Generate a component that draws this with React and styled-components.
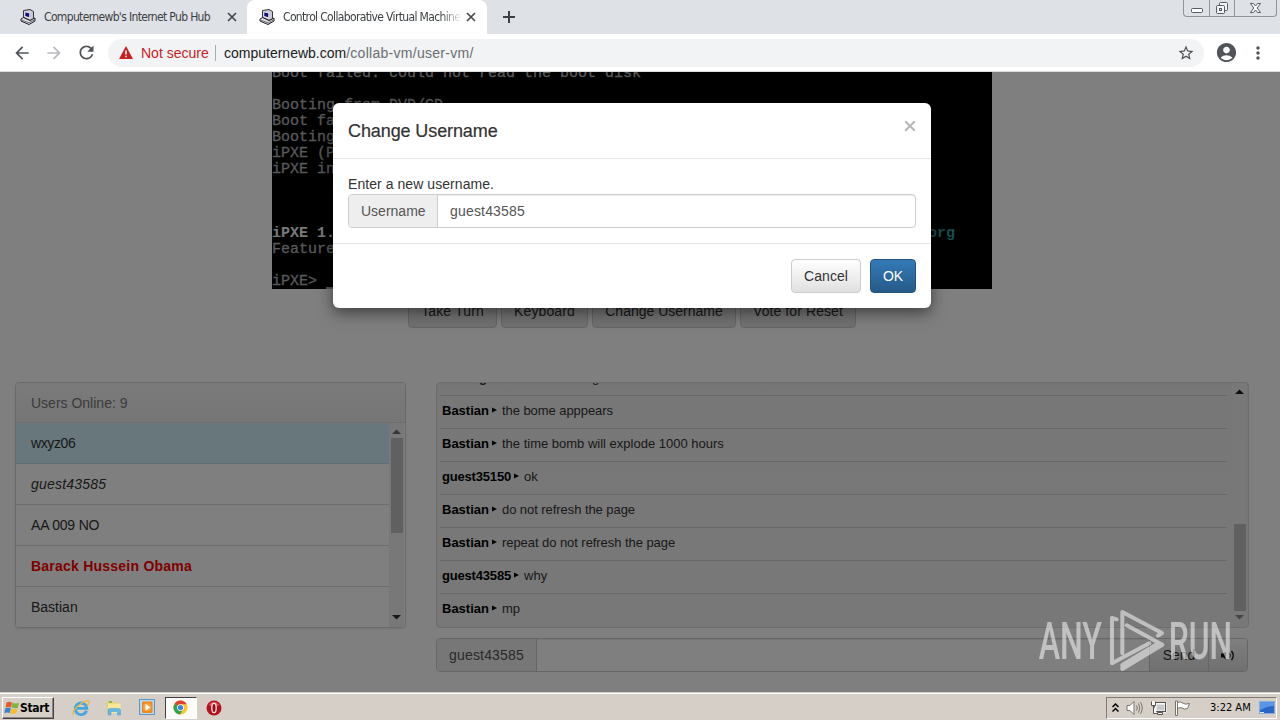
import React from 'react';
import styled, { createGlobalStyle } from 'styled-components';
import { MdStarBorder, MdAccountCircle, MdMoreVert, MdArrowBack, MdArrowForward, MdRefresh } from 'react-icons/md';

const users = [
  { name: 'wxyz06', turn: true, spacing: '-0.4px' },
  { name: 'guest43585', self: true, spacing: '0.2px' },
  { name: 'AA 009 NO', spacing: '-0.2px' },
  { name: 'Barack Hussein Obama', admin: true, spacing: '0.23px' },
  { name: 'Bastian' },
];

const messages = [
  { from: 'Bastian', text: 'the bome apppears', spacing: '-0.06px' },
  { from: 'Bastian', text: 'the time bomb will explode 1000 hours' },
  { from: 'guest35150', text: 'ok' },
  { from: 'Bastian', text: 'do not refresh the page', spacing: '-0.06px' },
  { from: 'Bastian', text: 'repeat do not refresh the page', spacing: '-0.06px' },
  { from: 'guest43585', text: 'why' },
  { from: 'Bastian', text: 'mp' },
];

const PcIcon = () => (
  <svg width="16" height="16" viewBox="0 0 16 16">
    <path d="M3.500 1.500 L10 0.500 L13.500 2.500 V10 L10 11.500 L3.500 8.500Z" fill="#c9cad2" stroke="#33343c" strokeWidth="1" />
    <path d="M4.500 2.500 L10 3.500 V9.500 L4.500 7.500Z" fill="#e4e4ea" />
    <path d="M5.300 3.500 L9.200 4.200 V8.300 L5.300 7Z" fill="#10107c" />
    <path d="M1 10 L3.500 8.500 L10 11.500 L15 9 V12 L9 15.500 L1 12Z" fill="#dcdce0" stroke="#1d1d22" strokeWidth="1" />
    <path d="M1.500 11 L9 13.800 L14.500 11" fill="none" stroke="#77787e" strokeWidth="1" />
  </svg>
);

const Cross = ({ size = 10, color = '#45494d', width = 1.7 }) => (
  <svg width={size} height={size} viewBox="0 0 10 10">
    <path d="M1 1L9 9M9 1L1 9" stroke={color} strokeWidth={width} fill="none" />
  </svg>
);

const Browser = () => (
  <>
    <TabStrip>
      <Tab>
        <PcIcon />
        <TabTitle>Computernewb's Internet Pub Hub</TabTitle>
        <Cross />
      </Tab>
      <Tab $active>
        <PcIcon />
        <TabTitle $fade>Control Collaborative Virtual Machine</TabTitle>
        <Cross />
      </Tab>
      <NewTab>
        <svg width="12" height="12" viewBox="0 0 12 12"><path d="M6 0V12M0 6H12" stroke="#3c4043" strokeWidth="2" /></svg>
      </NewTab>
      <WindowButtons>
        <WindowButton $w={25}>
          <svg width="14" height="14"><rect x="1.5" y="7.5" width="11" height="4" rx="1" fill="#fff" stroke="#555a63" /></svg>
        </WindowButton>
        <WindowButton $w={25}>
          <svg width="14" height="14" viewBox="0 0 14 14" fill="#f4f5f7" stroke="#555a63">
            <rect x="4.500" y="1.500" width="8" height="8" rx="1" />
            <rect x="1.500" y="4.500" width="8" height="8" rx="1" />
            <rect x="4.500" y="7.500" width="2" height="2" />
          </svg>
        </WindowButton>
        <WindowButton $w={41}>
          <svg width="13" height="12" viewBox="0 0 13 12">
            <path d="M1.500 1.500h3l2 2.500 2-2.500h3l-3.300 4.500 3.300 4.500h-3l-2-2.500-2 2.500h-3l3.300-4.500z" fill="#fff" stroke="#555a63" />
          </svg>
        </WindowButton>
      </WindowButtons>
    </TabStrip>
    <Toolbar>
      <ToolIcon><MdArrowBack size={20} color="#505357" /></ToolIcon>
      <ToolIcon><MdArrowForward size={20} color="#b9bbbe" /></ToolIcon>
      <ToolIcon><MdRefresh size={21} color="#505357" /></ToolIcon>
      <AddressBar>
        <svg width="14" height="13" viewBox="0 0 14 13">
          <path d="M7 0L14 13H0Z" fill="#c5221f" />
          <path d="M7 4.500V8.500M7 9.700V11.300" stroke="#fff" strokeWidth="1.600" />
        </svg>
        <NotSecure>Not secure</NotSecure>
        <Host>computernewb.com</Host>
        <Path>/collab-vm/user-vm/</Path>
        <StarSlot><MdStarBorder size={18} color="#4c4f53" /></StarSlot>
      </AddressBar>
      <Avatar><MdAccountCircle size={23} color="#505357" /></Avatar>
      <Menu><MdMoreVert size={20} color="#505357" /></Menu>
    </Toolbar>
  </>
);

const ScrollBar = ({ top, size, upColor, downColor }) => (
  <Track>
    <svg width="9" height="5"><path d="M0 5L4.500 0.500L9 5Z" fill={upColor} /></svg>
    <Thumb $top={top} $size={size} />
    <DownArrow width="9" height="5"><path d="M0 0L4.500 4.500L9 0Z" fill={downColor} /></DownArrow>
  </Track>
);

const Terminal = () => (
  <Screen>
    <Line>Boot failed: could not read the boot disk</Line>
    <Line />
    <Line>Booting from DVD/CD</Line>
    <Line>Boot fa</Line>
    <Line>Booting</Line>
    <Line>iPXE (P</Line>
    <Line>iPXE in</Line>
    <Line />
    <Line />
    <Line />
    <Line $bold>iPXE 1.<Org>org</Org></Line>
    <Line>Feature</Line>
    <Line />
    <Line>iPXE&gt; <Cursor /></Line>
  </Screen>
);

const Page = () => (
  <Content>
    <Terminal />
    <Actions>
      <Button $w={89} $spacing="0.14px">Take Turn</Button>
      <Button $w={87} $spacing="0.13px">Keyboard</Button>
      <Button $w={144}>Change Username</Button>
      <Button $w={116} $spacing="0.09px">Vote for Reset</Button>
    </Actions>
    <Columns>
      <UserPanel>
        <UserHead>Users Online: 9</UserHead>
        <UserBody>
          <UserList>
            {users.map((user) => (
              <User key={user.name} $turn={user.turn} $self={user.self} $admin={user.admin} $spacing={user.spacing}>
                {user.name}
              </User>
            ))}
          </UserList>
          <ScrollBar top={15} size={95} upColor="#6c6c6c" downColor="#303030" />
        </UserBody>
      </UserPanel>
      <ChatColumn>
        <ChatBox>
          <Messages>
            <Message>
              <Clipped $left={37}><b>g</b></Clipped>
              <Clipped $left={105}>g</Clipped>
            </Message>
            {messages.map((m, i) => (
              <Message key={i} $spacing={m.spacing}>
                <Sender $tight={m.from.length > 8}>{m.from}</Sender>
                <svg width="5" height="6"><path d="M0 0.500L5 3L0 5.500Z" fill="#000" /></svg>
                <span>{m.text}</span>
              </Message>
            ))}
          </Messages>
          <ScrollBar top={141} size={87} upColor="#1c1c1c" downColor="#8a8a8a" />
        </ChatBox>
        <InputGroup>
          <Addon $w={100} $spacing="0.18px">guest43585</Addon>
          <ChatInput />
          <GroupButton $w={59}>Send</GroupButton>
          <GroupButton $w={39}>
            <svg width="15" height="13" viewBox="0 0 15 13">
              <path d="M0 4.500H3V8.500H0ZM3 4L5 2.500V10.500L3 9Z" fill="#111" />
              <path d="M8 4Q10 6.500 8 9M10.500 2Q14 6.500 10.500 11" fill="none" stroke="#111" strokeWidth="1.400" />
            </svg>
          </GroupButton>
        </InputGroup>
      </ChatColumn>
    </Columns>
    <Backdrop />
    <UsernameModal />
    <Watermark />
  </Content>
);

const UsernameModal = () => (
  <Modal>
    <ModalHead>
      <ModalTitle>Change Username</ModalTitle>
      <CloseSlot><Cross size={12} color="#b8b8b8" width={1.8} /></CloseSlot>
    </ModalHead>
    <ModalBody>
      <Label>Enter a new username.</Label>
      <InputGroup $modal>
        <Addon $w={89}>Username</Addon>
        <NameInput>guest43585</NameInput>
      </InputGroup>
    </ModalBody>
    <ModalFoot>
      <Button $w={70} $spacing="0.07px">Cancel</Button>
      <Button $w={46} $primary>OK</Button>
    </ModalFoot>
  </Modal>
);

const Watermark = () => (
  <Mark width="200" height="70" viewBox="18 18 600 210">
    <g fill="#fff" fontFamily="Roboto" fontSize="154" fontWeight="500">
      <text x="26" y="178" textLength="190" lengthAdjust="spacingAndGlyphs">ANY</text>
      <text x="416" y="178" textLength="190" lengthAdjust="spacingAndGlyphs">RUN</text>
    </g>
    <g fill="none" stroke="#fff" strokeWidth="12" strokeLinejoin="round" strokeLinecap="round">
      <path d="M260 58L246 54V190L358 130" />
      <path d="M277 160V36L396 99L384 107" />
      <path d="M290 76L397 134L277 207V195L382 132" />
    </g>
  </Mark>
);

const Taskbar = () => (
  <Bar>
    <Start>
      <svg width="16" height="16" viewBox="0 0 16 16">
        <path d="M2.500 2.500Q5 1 8 2.500L7 7.500Q4.500 6.200 1.500 7.500Z" fill="#e8582a" />
        <path d="M8.500 2.700Q12 4.300 15 2.700L13.800 7.800Q11 9 7.500 7.600Z" fill="#7fb541" />
        <path d="M1.300 8.200Q4 7 6.800 8.200L5.700 13Q3 11.800 0.300 13Z" fill="#3f7fd0" />
        <path d="M7.300 8.500Q10.500 9.800 13.500 8.500L12.400 13Q9.500 14.600 6.200 13.300Z" fill="#f6bd2c" />
      </svg>
      Start
    </Start>
    <Launch>
      <svg width="18" height="18" viewBox="0 0 18 18">
        <path d="M14.500 11.800A5.800 5.800 0 1 1 14.800 9.300H5" fill="none" stroke="#45a5de" strokeWidth="2.800" />
        <path d="M2 16Q-1 13 6 7T16.500 2Q18 3.500 15 6.500" fill="none" stroke="#e8b93c" strokeWidth="1.400" />
      </svg>
    </Launch>
    <Launch>
      <svg width="18" height="18" viewBox="0 0 18 18">
        <path d="M2 2H7L8 3.500H14V14H2Z" fill="#e8cc6a" />
        <path d="M3 4.500H15.500V14H3Z" fill="#f8e79a" />
        <path d="M4 3H7" stroke="#62b34b" strokeWidth="1.500" />
        <path d="M3 16V11Q3 9.500 5 9.500H13Q15.500 9.500 15.500 11V16H12.500V12.500H6V16Z" fill="#65b7e2" stroke="#4a9cc9" strokeWidth=".5" />
      </svg>
    </Launch>
    <Launch>
      <svg width="17" height="17" viewBox="0 0 17 17">
        <rect x="0.500" y="0.500" width="15" height="15" fill="#b6d8f2" stroke="#5d97c5" />
        <rect x="3" y="2.500" width="10.500" height="11.500" rx="1" fill="#f08a1d" />
        <circle cx="8.200" cy="8.200" r="4" fill="#f5a548" />
        <path d="M6.500 5L11.500 8.300L6.500 11.500Z" fill="#fff" />
      </svg>
    </Launch>
    <Launch $active>
      <svg width="15" height="15" viewBox="0 0 16 16">
        <circle cx="8" cy="8" r="7.500" fill="#f9c823" />
        <path d="M8 8L1.500 4.200A7.500 7.500 0 0 1 14.500 4.400H8Z" fill="#dd4132" />
        <path d="M8 8L1.500 4.200A7.500 7.500 0 0 0 7.500 15.500L11 9.500Z" fill="#2fa350" />
        <circle cx="8" cy="8" r="3.600" fill="#fff" />
        <circle cx="8" cy="8" r="2.800" fill="#4180e8" />
      </svg>
    </Launch>
    <Launch>
      <svg width="16" height="16" viewBox="0 0 16 16">
        <circle cx="8" cy="8" r="7.500" fill="#b3121c" />
        <path d="M2.500 5Q8 -1.500 13.500 5Q8 8 2.500 5Z" fill="#d8525a" />
        <ellipse cx="8" cy="8" rx="2.200" ry="4.600" fill="#9a0c15" stroke="#f6dcdd" strokeWidth="1.400" />
      </svg>
    </Launch>
    <Tray>
      <svg width="7" height="10" viewBox="0 0 7 10"><path d="M0.500 4L3.500 1L6.500 4M0.500 8.500L3.500 5.500L6.500 8.500" fill="none" stroke="#000" strokeWidth="1.500" /></svg>
      <svg width="17" height="16" viewBox="0 0 17 16" fill="none" stroke="#77736e">
        <path d="M1 5.500H4L8 1.500V14.500L4 10.500H1Z" fill="#fff" />
        <path d="M10.500 5.500Q12 8 10.500 10.500M12.500 3.500Q15 8 12.500 12.500M14.500 2Q18 8 14.500 14" />
      </svg>
      <svg width="17" height="16" viewBox="0 0 17 16" fill="#fff" stroke="#55524e">
        <rect x="5.500" y="3.500" width="10" height="8" fill="#c9c9c9" stroke="#fff" strokeWidth="2" />
        <rect x="4.500" y="2.500" width="11" height="9" fill="none" />
        <path d="M7.500 14.500V12.500H12.500V14.500Z" />
        <path d="M1.500 1.500V5.500H5.500V1.500M3.500 5.500V13.500H7" />
      </svg>
      <svg width="17" height="16" viewBox="0 0 17 16" fill="#fff" stroke="#77736e">
        <path d="M1.500 1V15.500H3.500V1Z" />
        <path d="M3.500 2.500Q6 1 8.500 3Q11 5 15.500 3.500L13.500 8.500Q10 10 8 8Q6 7 3.500 8.500Z" />
      </svg>
      <Clock>3:22 AM</Clock>
      <svg width="16" height="13" viewBox="0 0 16 13">
        <rect x="0.500" y="0.500" width="15" height="12" fill="#2967c7" stroke="#86add8" />
        <path d="M1 1H15V5Q8 5 1 9Z" fill="#5b96e4" />
        <path d="M1 11.500H5" stroke="#d9e7f7" />
      </svg>
    </Tray>
  </Bar>
);

const App = () => (
  <Window>
    <GlobalStyle />
    <Browser />
    <Page />
    <Taskbar />
  </Window>
);

export default App;

const GlobalStyle = createGlobalStyle`
  * {
    box-sizing: border-box;
  }
  body {
    margin: 0;
    overflow: hidden;
    font-family: "Liberation Sans", Arial, sans-serif;
    font-size: 14px;
    color: #333;
  }
  svg {
    display: block;
    flex-shrink: 0;
  }
`;

const Window = styled.div`
  width: 1280px;
  height: 720px;
  display: flex;
  flex-direction: column;
  overflow: hidden;
`;

// browser chrome

const TabStrip = styled.div`
  display: flex;
  height: 34px;
  background: #dee1e6;
`;

const Tab = styled.div`
  display: flex;
  align-items: center;
  gap: 8px;
  width: ${({ $active }) => ($active ? '240px' : '247px')};
  padding: ${({ $active }) => ($active ? '0 11px 0 12px' : '0 10px 0 20px')};
  border-radius: 8px 8px 0 0;
  background: ${({ $active }) => ($active ? '#fff' : 'transparent')};
`;

const TabTitle = styled.div`
  flex: 1;
  margin-right: ${({ $fade }) => ($fade ? '-4px' : '0')};
  font-family: "DejaVu Sans Condensed", "DejaVu Sans", sans-serif;
  font-stretch: condensed;
  font-size: 12px;
  letter-spacing: -0.65px;
  color: #3c4043;
  white-space: nowrap;
  ${({ $fade }) => $fade && 'overflow: hidden; mask-image: linear-gradient(90deg, #000 88%, transparent 100%);'}
`;

const NewTab = styled.div`
  display: flex;
  align-items: center;
  padding-left: 16px;
`;

const WindowButtons = styled.div`
  display: flex;
  width: 94px;
  height: 17px;
  margin: 0 3px 0 auto;
  border: 1px solid #8f949d;
  border-top: 0;
  border-radius: 0 0 4px 4px;
`;

const WindowButton = styled.div`
  width: ${({ $w }) => $w}px;
  display: flex;
  align-items: center;
  justify-content: center;
  & + & {
    border-left: 1px solid #8f949d;
  }
`;

const Toolbar = styled.div`
  display: flex;
  align-items: center;
  height: 38px;
  padding: 0 6px;
  background: #fff;
  border-bottom: 1px solid #dcdcdc;
`;

const ToolIcon = styled.div`
  width: 32px;
  display: flex;
  justify-content: center;
`;

const AddressBar = styled.div`
  display: flex;
  align-items: center;
  width: 1096px;
  height: 28px;
  margin-left: 6px;
  padding: 0 9px 0 11px;
  border-radius: 14px;
  background: #f1f3f4;
  white-space: nowrap;
`;

const NotSecure = styled.div`
  width: 75px;
  margin-left: 8px;
  line-height: 16px;
  border-right: 1px solid #a9abae;
  color: #c5221f;
`;

const Host = styled.div`
  margin-left: 8px;
  color: #202124;
`;

const Path = styled.div`
  color: #6a6e73;
  letter-spacing: 0.28px;
`;

const StarSlot = styled.div`
  margin-left: auto;
`;

const Avatar = styled.div`
  margin-left: 11px;
`;

const Menu = styled.div`
  margin-left: 10px;
`;

// page

const Content = styled.div`
  position: relative;
  height: 620px;
  overflow: hidden;
  background: #fff;
`;

const Screen = styled.div`
  display: flex;
  flex-direction: column;
  justify-content: flex-end;
  width: 720px;
  height: 217px;
  margin-left: 272px;
  overflow: hidden;
  background: #000;
`;

const Line = styled.div`
  flex-shrink: 0;
  display: flex;
  height: 16px;
  font: ${({ $bold }) => ($bold ? 'bold' : 'normal')} 15px/18px "Liberation Mono", monospace;
  color: ${({ $bold }) => ($bold ? '#f0f0f0' : '#b0b0b0')};
  -webkit-text-stroke: ${({ $bold }) => ($bold ? '0' : '0.3px #b0b0b0')};
  white-space: pre;
`;

const Org = styled.span`
  margin-left: 593px;
  color: #2f9a9a;
`;

const Cursor = styled.span`
  width: 9px;
  height: 2px;
  margin-top: 14px;
  background: #aaa;
`;

const Actions = styled.div`
  display: flex;
  gap: 4px;
  margin: 5px 0 54px 408px;
`;

const Button = styled.div`
  display: flex;
  align-items: center;
  justify-content: center;
  width: ${({ $w }) => $w}px;
  height: 34px;
  border: 1px solid ${({ $primary }) => ($primary ? '#245580' : '#ccc')};
  border-radius: 4px;
  background: ${({ $primary }) => ($primary ? 'linear-gradient(#337ab7, #265a88)' : 'linear-gradient(#fff, #e0e0e0)')};
  color: ${({ $primary }) => ($primary ? '#fff' : '#333')};
  letter-spacing: ${({ $spacing }) => $spacing || '0'};
  white-space: nowrap;
`;

const Columns = styled.div`
  display: flex;
  gap: 30px;
  margin-left: 15px;
`;

const UserPanel = styled.div`
  display: flex;
  flex-direction: column;
  width: 391px;
  height: 246px;
  border: 1px solid #d5d5d5;
  border-radius: 4px;
  overflow: hidden;
  box-shadow: 0 1px 2px rgba(0, 0, 0, 0.1);
`;

const UserHead = styled.div`
  height: 40px;
  padding-left: 15px;
  line-height: 40px;
  border-bottom: 1px solid #ddd;
  background: linear-gradient(#f5f5f5, #ececec);
  color: #777;
`;

const UserBody = styled.div`
  flex: 1;
  display: flex;
  min-height: 0;
  padding-right: 1px;
`;

const UserList = styled.div`
  flex: 1;
  overflow: hidden;
`;

const User = styled.div`
  height: 41px;
  padding-left: 15px;
  line-height: 40px;
  border-bottom: 1px solid ${({ $turn }) => ($turn ? '#bfe0ea' : '#dadada')};
  background: ${({ $turn }) => ($turn ? '#d0eef7' : '#fff')};
  color: ${({ $admin }) => ($admin ? '#f00' : '#333')};
  font-weight: ${({ $admin }) => ($admin ? 'bold' : 'normal')};
  font-style: ${({ $self }) => ($self ? 'italic' : 'normal')};
  letter-spacing: ${({ $spacing }) => $spacing || '0'};
`;

const Track = styled.div`
  display: flex;
  flex-direction: column;
  align-items: center;
  width: 15px;
  padding: 6px 0 7px;
  background: #f1f1f1;
`;

const Thumb = styled.div`
  width: 12px;
  height: ${({ $size }) => $size}px;
  margin-top: ${({ $top }) => $top - 11}px;
  background: #c1c1c1;
`;

const DownArrow = styled.svg`
  margin-top: auto;
`;

const ChatColumn = styled.div`
  width: 813px;
`;

const ChatBox = styled.div`
  display: flex;
  height: 246px;
  margin-bottom: 10px;
  padding-right: 1px;
  border: 1px solid #dcdcdc;
  border-radius: 4px;
  background: linear-gradient(#efefef, #f1f1f1);
  box-shadow: inset 0 1px 3px rgba(0, 0, 0, 0.05);
  overflow: hidden;
`;

const Messages = styled.div`
  flex: 1;
  display: flex;
  flex-direction: column;
  justify-content: flex-end;
  margin: 0 5px 1px 3px;
`;

const Message = styled.div`
  display: flex;
  align-items: center;
  flex-shrink: 0;
  height: 33px;
  padding: 0 0 4px 2px;
  border-top: 1px solid #d0d0d0;
  font-size: 13px;
  letter-spacing: ${({ $spacing }) => $spacing || '0'};
  svg {
    margin: 0 5px 0 3px;
  }
`;

const Clipped = styled.span`
  margin-left: ${({ $left }) => $left}px;
`;

const Sender = styled.b`
  color: #000;
  letter-spacing: ${({ $tight }) => ($tight ? '-0.18px' : '0')};
`;

const InputGroup = styled.div`
  display: flex;
  width: ${({ $modal }) => ($modal ? '568px' : '812px')};
  height: 34px;
  border: 1px solid #ccc;
  border-radius: 4px;
  overflow: hidden;
  background: #fff;
`;

const Addon = styled.div`
  display: flex;
  align-items: center;
  width: ${({ $w }) => $w}px;
  padding-left: 12px;
  border-right: 1px solid #ccc;
  background: #eee;
  color: #555;
  letter-spacing: ${({ $spacing }) => $spacing || '0'};
`;

const NameInput = styled.div`
  flex: 1;
  padding-left: 12px;
  line-height: 32px;
  color: #555;
  letter-spacing: 0.18px;
  box-shadow: inset 0 1px 1px rgba(0, 0, 0, 0.075);
`;

const ChatInput = styled.div`
  flex: 1;
  box-shadow: inset 0 1px 1px rgba(0, 0, 0, 0.075);
`;

const GroupButton = styled.div`
  display: flex;
  align-items: center;
  justify-content: center;
  width: ${({ $w }) => $w}px;
  border-left: 1px solid #ccc;
  background: linear-gradient(#fff, #e0e0e0);
`;

// dialog

const Backdrop = styled.div`
  position: absolute;
  inset: 0;
  background: rgba(0, 0, 0, 0.5);
`;

const Modal = styled.div`
  position: absolute;
  left: 333px;
  top: 31px;
  width: 598px;
  height: 205px;
  border-radius: 6px;
  background: #fff;
  box-shadow: 0 5px 15px rgba(0, 0, 0, 0.5);
`;

const ModalHead = styled.div`
  display: flex;
  justify-content: space-between;
  height: 56px;
  padding: 0 15px;
  border-bottom: 1px solid #e5e5e5;
`;

const ModalTitle = styled.div`
  font-size: 18px;
  line-height: 57px;
  letter-spacing: -0.1px;
  -webkit-text-stroke: 0.2px #333;
`;

const CloseSlot = styled.div`
  padding-top: 17px;
`;

const ModalBody = styled.div`
  height: 84px;
  padding: 15px 15px 0;
`;

const Label = styled.div`
  line-height: 20px;
  letter-spacing: 0.06px;
`;

const ModalFoot = styled.div`
  display: flex;
  justify-content: flex-end;
  gap: 9px;
  padding: 15px;
  border-top: 1px solid #e5e5e5;
`;

const Mark = styled.svg`
  position: absolute;
  left: 1036px;
  top: 534px;
  opacity: 0.52;
`;

// taskbar

const Bar = styled.div`
  display: flex;
  align-items: center;
  height: 28px;
  padding: 2px 3px 0 2px;
  border-top: 1px solid #d4d0c8;
  background: #d6cfc7;
  box-shadow: inset 0 1px 0 #fff;
`;

const Start = styled.div`
  display: flex;
  align-items: center;
  width: 52px;
  height: 22px;
  margin-right: 10px;
  padding-left: 1px;
  border: 1px solid;
  border-color: #fff #404040 #404040 #fff;
  box-shadow: inset -1px -1px 0 #8c8780;
  font: bold 12px "DejaVu Sans Condensed", "DejaVu Sans", sans-serif;
  font-stretch: condensed;
  letter-spacing: -0.34px;
  color: #000;
`;

const Launch = styled.div`
  display: flex;
  align-items: center;
  justify-content: center;
  width: ${({ $active }) => ($active ? '32px' : '33.500px')};
  height: 22px;
  ${({ $active }) => $active && `
    margin-right: 1px;
    border: 1px solid;
    border-color: #404040 #fff #fff #404040;
    background: #fcfbfa;
  `}
`;

const Tray = styled.div`
  display: flex;
  align-items: center;
  gap: 7px;
  width: 171px;
  height: 22px;
  margin-left: auto;
  padding-left: 5px;
  border: 1px solid;
  border-color: #807b75 #fff #fff #807b75;
`;

const Clock = styled.div`
  width: 42px;
  margin-left: 12px;
  font: 11px "DejaVu Sans Condensed", "DejaVu Sans", sans-serif;
  font-stretch: condensed;
  color: #000;
  white-space: nowrap;
`;
